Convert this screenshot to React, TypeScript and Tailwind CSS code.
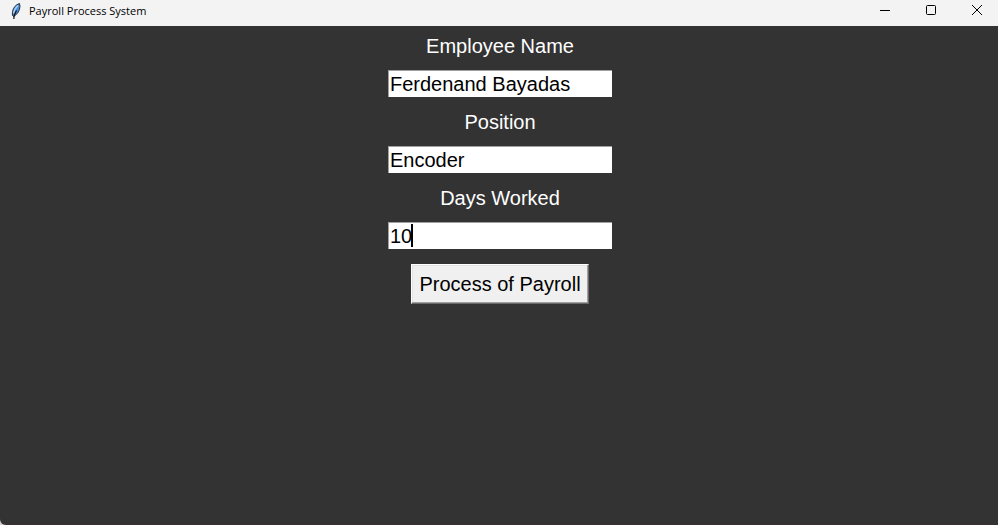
import { useState } from "react";

type FieldProps = {
  id: string;
  label: string;
  value: string;
  onChange: (value: string) => void;
  caret?: boolean;
};

function Field({ id, label, value, onChange, caret = false }: FieldProps) {
  return (
    <div className="flex flex-col items-center gap-2">
      <label htmlFor={id} className="text-xl leading-8 text-white">
        {label}
      </label>
      <div className="relative">
        <input
          id={id}
          type="text"
          value={value}
          onChange={(e) => onChange(e.target.value)}
          className="block h-[27px] w-56 border-t border-l border-[#a0a0a0] bg-white pt-px pl-px text-xl leading-6 text-black outline-none"
        />
        {caret && <span className="absolute top-0.5 left-[23px] h-[23px] w-0.5 bg-black" />}
      </div>
    </div>
  );
}

function FeatherIcon() {
  return (
    <svg width="10" height="18" viewBox="0 0 10 18" aria-hidden="true">
      <path d="M8.500 1.500C5 2.500 2.200 5.500 1.500 9.500L1.300 13l1.200 1.500C6 12.500 8.500 9.500 9 4.500Z" fill="#4a90e2" stroke="#2a2f3a" strokeWidth="1" />
      <path d="M7 3.500C4.500 5.500 3.200 8.500 2.600 11.500" stroke="#a9d2f8" strokeWidth="1.400" fill="none" />
      <path d="M5.500 8.500 3.300 13 2.800 17" stroke="#101010" strokeWidth="1.200" fill="none" />
    </svg>
  );
}

function TitleBar() {
  return (
    <header className="flex h-[26px] items-start justify-between bg-[#f3f3f3] text-black">
      <div className="flex items-center gap-2 pl-[11px]">
        <FeatherIcon />
        <h1 className="pt-px font-['Open_Sans',sans-serif] text-[11px] leading-5">Payroll Process System</h1>
      </div>
      <div className="flex gap-9 pr-4">
        <button type="button" aria-label="Minimize" className="flex h-5 items-center">
          <svg width="10" height="10" viewBox="0 0 10 10">
            <path d="M0 5.500H10" stroke="black" />
          </svg>
        </button>
        <button type="button" aria-label="Maximize" className="flex h-5 items-center">
          <svg width="10" height="10" viewBox="0 0 10 10">
            <rect x="0.500" y="0.500" width="9" height="9" rx="1" fill="none" stroke="black" />
          </svg>
        </button>
        <button type="button" aria-label="Close" className="flex h-5 items-center">
          <svg width="10" height="10" viewBox="0 0 10 10">
            <path d="M0 0 10 10M10 0 0 10" stroke="black" />
          </svg>
        </button>
      </div>
    </header>
  );
}

export default function App() {
  const [name, setName] = useState("Ferdenand Bayadas");
  const [position, setPosition] = useState("Encoder");
  const [days, setDays] = useState("10");

  return (
    <div className="bg-[#d0d0d0]">
      <div className="flex min-h-screen flex-col rounded-bl-md border-b border-[#3b2f35] bg-[#333333] font-['Liberation_Sans',Arial,sans-serif]">
        <TitleBar />
        <main className="flex-1 pt-1 pl-0.5">
          <form className="flex flex-col items-center" onSubmit={(e) => e.preventDefault()}>
            <div className="flex flex-col gap-[9px]">
              <Field id="name" label="Employee Name" value={name} onChange={setName} />
              <Field id="position" label="Position" value={position} onChange={setPosition} />
              <Field id="days" label="Days Worked" value={days} onChange={setDays} caret />
            </div>
            <button
              type="submit"
              className="mt-[15px] h-10 border border-t-white border-r-[#696969] border-b-[#696969] border-l-white bg-[#f0f0f0] px-[7px] text-xl leading-8 text-black shadow-[inset_-1px_-1px_0_#a0a0a0,inset_1px_1px_0_#e3e3e3]"
            >
              Process of Payroll
            </button>
          </form>
        </main>
      </div>
    </div>
  );
}
